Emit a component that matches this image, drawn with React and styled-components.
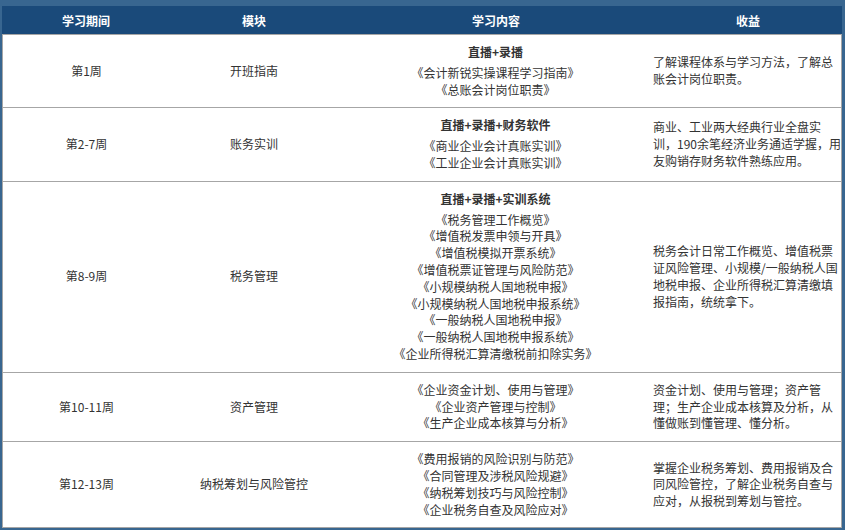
import React from 'react';
import styled, { createGlobalStyle } from 'styled-components';

const GlobalStyle = createGlobalStyle`
  html, body {
    margin: 0;
    padding: 0;
    overflow: hidden;
  }
  body {
    font-family: "Noto Sans CJK SC", "Liberation Sans", sans-serif;
    font-size: 12px;
    color: #333;
  }
`;

const Frame = styled.div`
  background: #386690;
  padding: 6px 3px 0 2px;
  min-height: 100vh;
  box-sizing: border-box;
`;

const HeaderRow = styled.div`
  display: grid;
  grid-template-columns: 168px 168px 316px 188px;
  height: 28px;
  background: #1a4a7a;
  color: #fff;
  font-weight: bold;
`;

const HeaderCell = styled.div`
  display: flex;
  align-items: center;
  justify-content: center;
`;

const Body = styled.div`
  background: #fff;
  border-left: 1px solid #a6a6a6;
  border-right: 1px solid #a6a6a6;
  border-bottom: 1px solid #a6a6a6;
`;

const Row = styled.div`
  display: grid;
  grid-template-columns: 167px 168px 315px 188px;
  border-top: 1px solid #a6a6a6;
`;

const Cell = styled.div`
  display: flex;
  flex-direction: column;
  justify-content: center;
  align-items: ${p => (p.$left ? 'flex-start' : 'center')};
  text-align: ${p => (p.$left ? 'left' : 'center')};
  padding: 9px 0;
  line-height: 16.8px;
`;

const Lead = styled.div`
  font-weight: bold;
  margin-bottom: 4px;
`;

const Item = styled.div`
  white-space: nowrap;
`;

const Benefit = styled.div`
  width: 188px;
`;

const rows = [
  {
    period: '第1周',
    module: '开班指南',
    lead: '直播+录播',
    items: ['《会计新锐实操课程学习指南》', '《总账会计岗位职责》'],
    benefit: '了解课程体系与学习方法，了解总账会计岗位职责。'
  },
  {
    period: '第2-7周',
    module: '账务实训',
    lead: '直播+录播+财务软件',
    items: ['《商业企业会计真账实训》', '《工业企业会计真账实训》'],
    benefit: '商业、工业两大经典行业全盘实训，190余笔经济业务通适学握，用友购销存财务软件熟练应用。'
  },
  {
    period: '第8-9周',
    module: '税务管理',
    lead: '直播+录播+实训系统',
    items: [
      '《税务管理工作概览》',
      '《增值税发票申领与开具》',
      '《增值税模拟开票系统》',
      '《增值税票证管理与风险防范》',
      '《小规模纳税人国地税申报》',
      '《小规模纳税人国地税申报系统》',
      '《一般纳税人国地税申报》',
      '《一般纳税人国地税申报系统》',
      '《企业所得税汇算清缴税前扣除实务》'
    ],
    benefit: '税务会计日常工作概览、增值税票证风险管理、小规模/一般纳税人国地税申报、企业所得税汇算清缴填报指南，统统拿下。'
  },
  {
    period: '第10-11周',
    module: '资产管理',
    items: ['《企业资金计划、使用与管理》', '《企业资产管理与控制》', '《生产企业成本核算与分析》'],
    benefit: '资金计划、使用与管理；资产管理；生产企业成本核算及分析，从懂做账到懂管理、懂分析。'
  },
  {
    period: '第12-13周',
    module: '纳税筹划与风险管控',
    items: [
      '《费用报销的风险识别与防范》',
      '《合同管理及涉税风险规避》',
      '《纳税筹划技巧与风险控制》',
      '《企业税务自查及风险应对》'
    ],
    benefit: '掌握企业税务筹划、费用报销及合同风险管控，了解企业税务自查与应对，从报税到筹划与管控。'
  }
];

const App = () => {
  return (
    <>
      <GlobalStyle />
      <Frame>
        <HeaderRow>
          <HeaderCell>学习期间</HeaderCell>
          <HeaderCell>模块</HeaderCell>
          <HeaderCell>学习内容</HeaderCell>
          <HeaderCell>收益</HeaderCell>
        </HeaderRow>
        <Body>
          {rows.map((row, index) => (
            <Row key={index}>
              <Cell>{row.period}</Cell>
              <Cell>{row.module}</Cell>
              <Cell>
                {row.lead && <Lead>{row.lead}</Lead>}
                {row.items.map(item => (
                  <Item key={item}>{item}</Item>
                ))}
              </Cell>
              <Cell $left>
                <Benefit>{row.benefit}</Benefit>
              </Cell>
            </Row>
          ))}
        </Body>
      </Frame>
    </>
  );
};

export default App;
